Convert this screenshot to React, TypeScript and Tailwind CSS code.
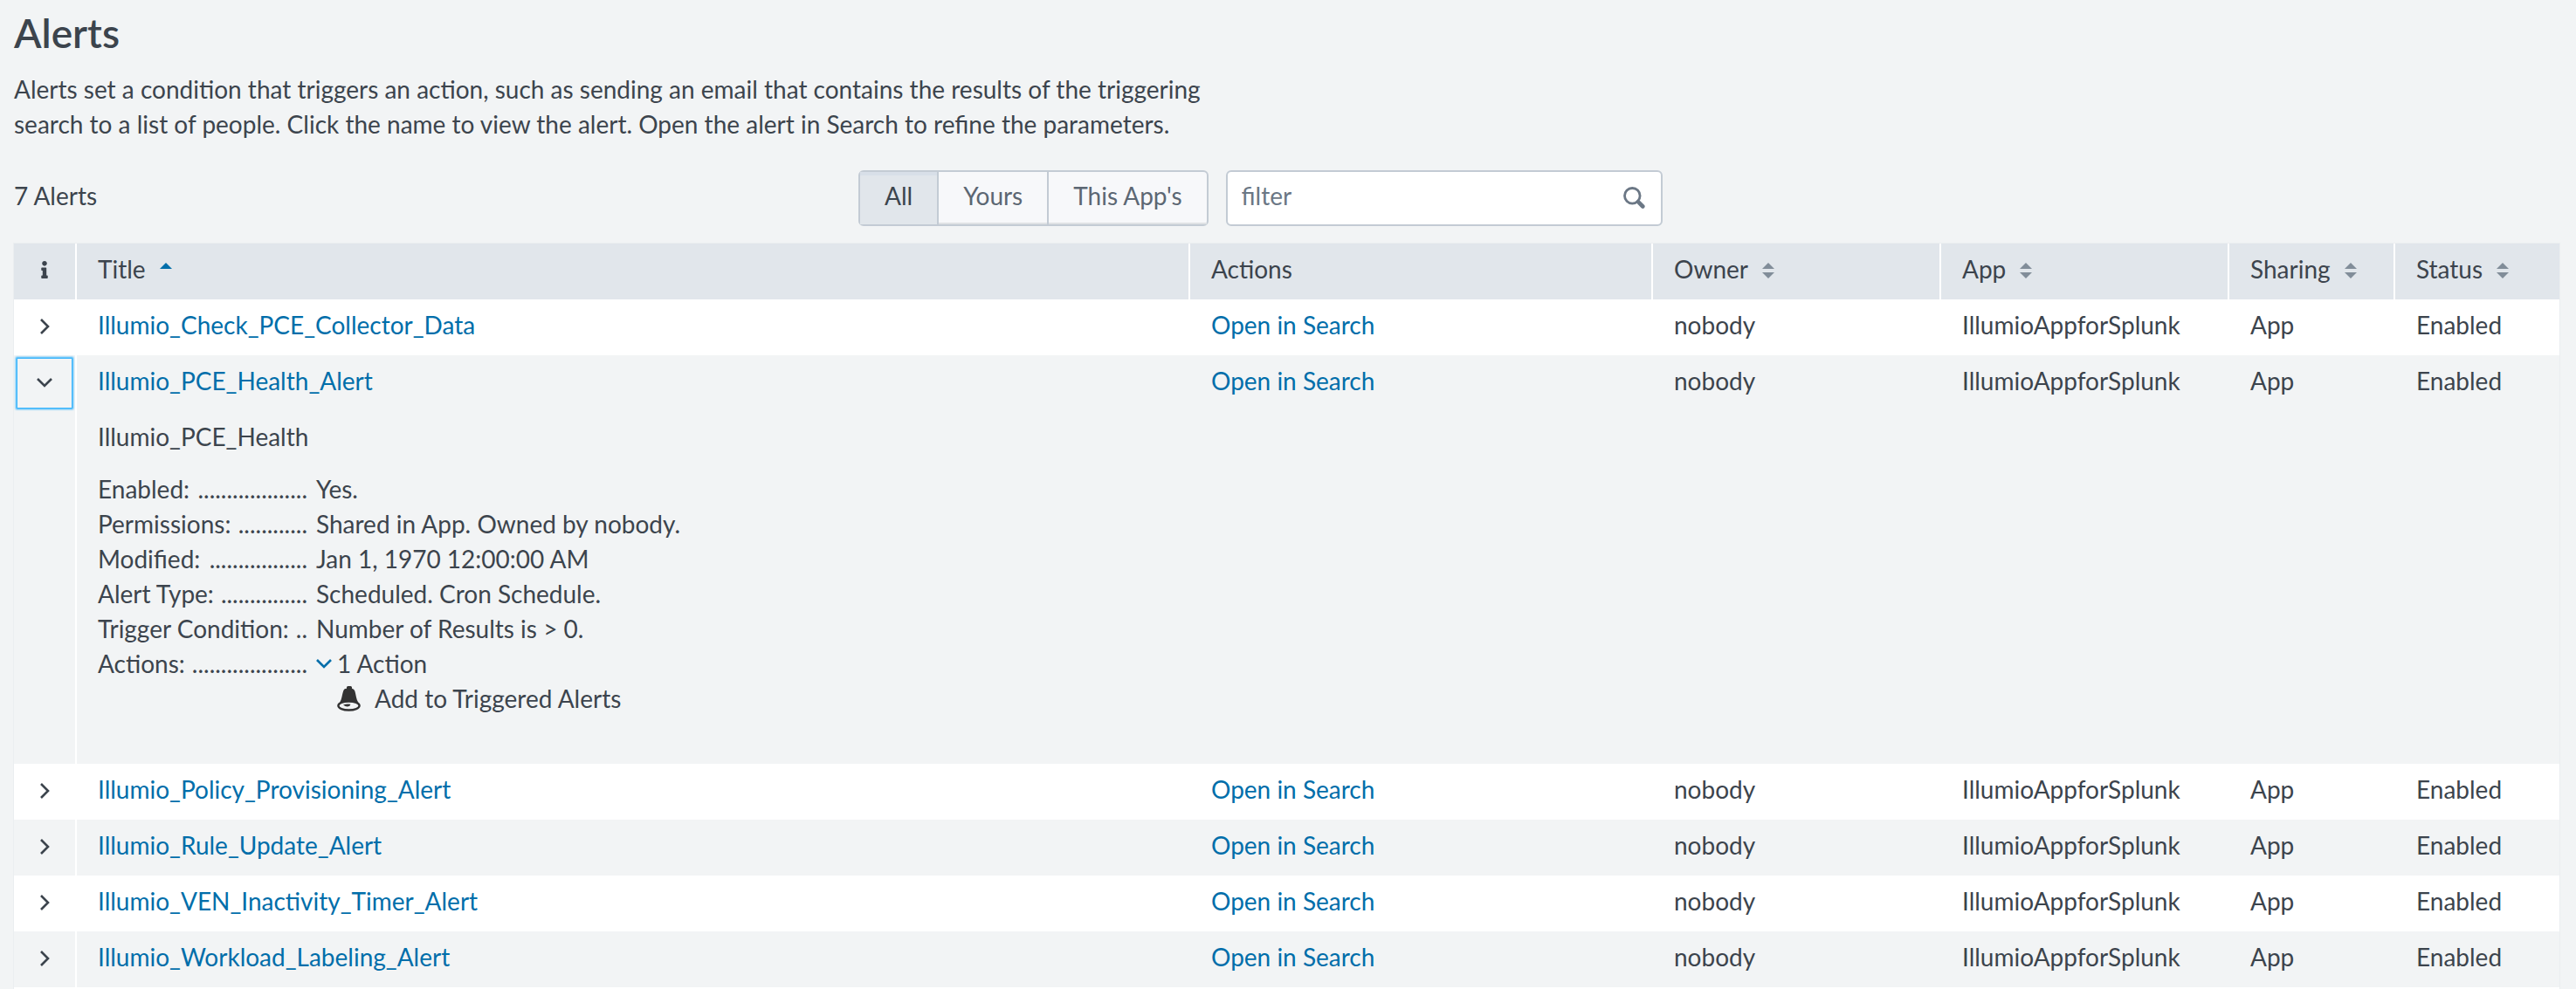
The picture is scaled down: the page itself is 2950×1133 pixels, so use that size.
import { useState } from "react";
import { FaInfo } from "react-icons/fa";
import clsx from "clsx";

type Alert = {
  name: string;
  description?: string;
  details?: { label: string; value: string; dots: number }[];
  actions?: string[];
};

const ALERTS: Alert[] = [
  { name: "Illumio_Check_PCE_Collector_Data" },
  {
    name: "Illumio_PCE_Health_Alert",
    description: "Illumio_PCE_Health",
    details: [
      { label: "Enabled:", value: "Yes.", dots: 19 },
      { label: "Permissions:", value: "Shared in App. Owned by nobody.", dots: 12 },
      { label: "Modified:", value: "Jan 1, 1970 12:00:00 AM", dots: 17 },
      { label: "Alert Type:", value: "Scheduled. Cron Schedule.", dots: 15 },
      { label: "Trigger Condition:", value: "Number of Results is > 0.", dots: 2 },
    ],
    actions: ["Add to Triggered Alerts"],
  },
  { name: "Illumio_Policy_Provisioning_Alert" },
  { name: "Illumio_Rule_Update_Alert" },
  { name: "Illumio_VEN_Inactivity_Timer_Alert" },
  { name: "Illumio_Workload_Labeling_Alert" },
];

const SCOPES = ["All", "Yours", "This App's"];

const COLUMNS = [
  { label: "Title", width: "", sort: "asc" },
  { label: "Actions", width: "w-[530px]", sort: "" },
  { label: "Owner", width: "w-[330px]", sort: "both" },
  { label: "App", width: "w-[330px]", sort: "both" },
  { label: "Sharing", width: "w-[190px]", sort: "both" },
  { label: "Status", width: "w-[188px]", sort: "both" },
];

const CELL = "px-6 pt-[9px] pb-[15px] text-left font-normal";

function SortIcon({ sort }: { sort: string }) {
  return (
    <svg width="14" height="18" viewBox="0 0 14 18" className="mt-1 shrink-0" aria-hidden="true">
      <path d="M7 0 14 7H0Z" fill={sort === "asc" ? "#006eaa" : "#818d99"} />
      {sort === "both" && <path d="M0 11h14l-7 7Z" fill="#818d99" />}
    </svg>
  );
}

function Chevron({ open }: { open: boolean }) {
  return open ? (
    <svg width="18" height="11" viewBox="0 0 18 11" className="shrink-0" fill="none" stroke="currentColor" strokeWidth="2.6" aria-hidden="true">
      <path d="M1 1l8 8 8-8" />
    </svg>
  ) : (
    <svg width="11" height="18" viewBox="0 0 11 18" className="shrink-0" fill="none" stroke="currentColor" strokeWidth="2.6" aria-hidden="true">
      <path d="M1 1l8 8-8 8" />
    </svg>
  );
}

function BellIcon() {
  return (
    <svg width="27" height="29" viewBox="0 0 27 29" className="shrink-0" aria-hidden="true">
      <path
        d="M11 1.5Q11 0 12.5 0h3Q17 0 17 1.5v1.2q2.600.4 3.300 2.900C22 11 21.600 14.500 24.500 19H3C5.800 14.500 5.400 11 7.200 5.600 8 3.100 9.200 2.900 11 2.700Z"
        fill="#333"
      />
      <ellipse cx="13.5" cy="22.5" rx="12.1" ry="5" fill="#f2f4f5" stroke="#333" strokeWidth="2.4" />
      <path d="M7 21.500q4-1.500 8.500-.800-.500 2.500-3.500 2.700-2.500.100-5-1.900Z" fill="#333" />
    </svg>
  );
}

function SearchIcon() {
  return (
    <svg width="25" height="25" viewBox="0 0 25 25" fill="none" stroke="#6b7785" aria-hidden="true">
      <circle cx="10.3" cy="10.3" r="8.8" strokeWidth="2.8" />
      <path d="M17 17.2l5.300 5.300" strokeWidth="4.6" strokeLinecap="round" />
    </svg>
  );
}

// Label followed by dots up to the value column.
function Term({ label, dots }: { label: string; dots: number }) {
  return (
    <dt className="flex justify-between whitespace-nowrap">
      {label}
      <span aria-hidden="true">{".".repeat(dots)}</span>
    </dt>
  );
}

function AlertDetails({ alert }: { alert: Alert }) {
  const [actionsOpen, setActionsOpen] = useState(true);
  const actions = alert.actions ?? [];

  return (
    <div className="pb-10">
      <p>{alert.description}</p>
      <dl className="mt-5 grid grid-cols-[240px_1fr] gap-x-[10px]">
        {alert.details?.map((d) => (
          <div key={d.label} className="contents">
            <Term label={d.label} dots={d.dots} />
            <dd>{d.value}</dd>
          </div>
        ))}
        <Term label="Actions:" dots={20} />
        <dd>
          <button type="button" className="flex items-center gap-1 leading-10" onClick={() => setActionsOpen(!actionsOpen)}>
            <span className="flex w-5 text-[#006eaa]">
              <Chevron open={actionsOpen} />
            </span>
            {actions.length} Action
          </button>
          {actionsOpen &&
            actions.map((a) => (
              <div key={a} className="flex items-center gap-4 pl-6">
                <BellIcon />
                {a}
              </div>
            ))}
        </dd>
      </dl>
    </div>
  );
}

function AlertRow({ alert, striped, open, onToggle }: { alert: Alert; striped: boolean; open: boolean; onToggle: () => void }) {
  const bg = striped ? "bg-[#f2f4f5]" : "bg-white";

  return (
    <>
      <tr className={bg}>
        <td className="border-r-2 border-white p-1">
          <button
            type="button"
            aria-expanded={open}
            aria-label={`Details of ${alert.name}`}
            onClick={onToggle}
            className={clsx("flex h-14 w-full items-center justify-center pb-0.5", open && "shadow-[0_0_2px_2px_#2db0fc]")}
          >
            <Chevron open={open} />
          </button>
        </td>
        <td className={CELL}>
          <a href="#" className="text-[#006eaa]">{alert.name}</a>
        </td>
        <td className={CELL}>
          <a href="#" className="text-[#006eaa]">Open in Search</a>
        </td>
        <td className={CELL}>nobody</td>
        <td className={CELL}>IllumioAppforSplunk</td>
        <td className={CELL}>App</td>
        <td className={CELL}>Enabled</td>
      </tr>
      {open && alert.details && (
        <tr className={bg}>
          <td className="border-r-2 border-white" />
          <td className={CELL} colSpan={6}>
            <AlertDetails alert={alert} />
          </td>
        </tr>
      )}
    </>
  );
}

export default function App() {
  const [scope, setScope] = useState("All");
  const [filter, setFilter] = useState("");
  const [openName, setOpenName] = useState("Illumio_PCE_Health_Alert");

  const shown = ALERTS.filter((a) => a.name.toLowerCase().includes(filter.toLowerCase()));

  return (
    <main className="min-h-screen bg-[#f2f4f5] pt-[14px] pr-[19px] pl-4 font-[Lato,sans-serif] text-[28px] leading-10 text-[#3c444d]">
      <h1 className="text-[46px] leading-[48px] font-semibold">Alerts</h1>
      <p className="mt-5 max-w-[1400px]">
        Alerts set a condition that triggers an action, such as sending an email that contains the results of the triggering
        search to a list of people. Click the name to view the alert. Open the alert in Search to refine the parameters.
      </p>

      <div className="mt-[33px] flex items-start">
        <div className="shrink basis-[967px] pt-[9px]">7 Alerts</div>

        <div className="flex rounded-md border-2 border-[#c3cbd4] bg-[#f7f8fa]" role="group" aria-label="Scope">
          {SCOPES.map((s) => (
            <button
              key={s}
              type="button"
              aria-pressed={s === scope}
              onClick={() => setScope(s)}
              className={clsx(
                "border-r-2 border-[#c3cbd4] px-7 pt-[7px] pb-[13px] last:border-r-0",
                s === scope
                  ? "bg-[#e1e6eb] shadow-[inset_0_4px_0_#d8dfe8]"
                  : "text-[#5c6773] shadow-[inset_0_-2px_0_#dfe2e4]",
              )}
            >
              {s}
            </button>
          ))}
        </div>

        <div className="relative ml-5 basis-[500px]">
          <input
            type="text"
            aria-label="filter"
            placeholder="filter"
            value={filter}
            onChange={(e) => setFilter(e.target.value)}
            className="block h-16 w-full rounded-md border-2 border-[#c3cbd4] bg-white pr-14 pb-[6px] pl-4 outline-none placeholder:text-[#6b7785]"
          />
          <span className="absolute top-[19px] right-5">
            <SearchIcon />
          </span>
        </div>
      </div>

      <table className="mt-5 w-full table-fixed border-separate border-spacing-0 border-b-2 border-white shadow-[0_0_0_1px_#ebeef0]">
        <thead>
          <tr className="bg-[#e1e6eb]">
            <th className="w-[72px] border-r-2 border-white pb-1">
              <FaInfo className="mx-auto size-5" aria-label="Info" />
            </th>
            {COLUMNS.map((c) => (
              <th key={c.label} className={clsx(CELL, c.width, "border-r-2 border-white last:border-r-0")}>
                {c.sort ? (
                  <button type="button" className="flex items-center gap-4">
                    {c.label}
                    <SortIcon sort={c.sort} />
                  </button>
                ) : (
                  c.label
                )}
              </th>
            ))}
          </tr>
        </thead>
        <tbody>
          {shown.map((a, i) => (
            <AlertRow
              key={a.name}
              alert={a}
              striped={i % 2 === 1}
              open={a.name === openName}
              onToggle={() => setOpenName(a.name === openName ? "" : a.name)}
            />
          ))}
        </tbody>
      </table>
    </main>
  );
}
